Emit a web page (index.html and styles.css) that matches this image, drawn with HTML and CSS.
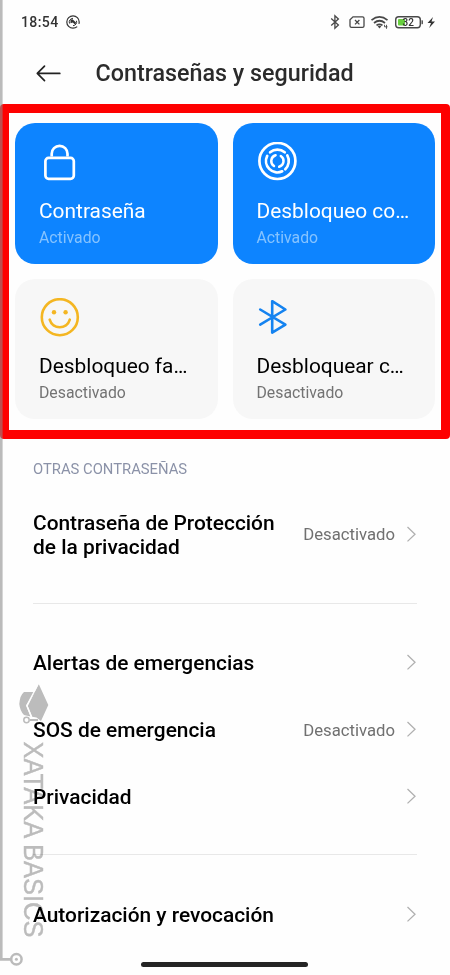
FILE: index.html
```html
<!DOCTYPE html>
<html lang="es">
<head>
<meta charset="utf-8">
<title>Contraseñas y seguridad</title>
<link rel="stylesheet" href="styles.css">
</head>
<body>
<div class="screen">
  <div class="status">
    <span class="clock">18:54</span>
    <svg class="app" width="14" height="14" viewBox="0 0 14 14" fill="none" stroke="#333"><circle cx="7" cy="7" r="6.2" stroke-width="1.2" stroke-dasharray="33 3" stroke-dashoffset="-5"/><path d="M3.5 8.5A3.8 3.8 0 0 1 7 3.3M10.5 5.8A3.8 3.8 0 0 1 7 10.7" stroke-width="1"/><path d="M4.5 4.5L6.5 4.2 10 7.5 9.2 9.8 6.8 7.6 4.5 8.2Z" fill="#333" stroke="none"/></svg>
    <svg class="tray" width="110" height="18" viewBox="0 0 110 18" fill="none" stroke="#484848">
      <path d="M1.2 5.5L8.4 12 4.9 15.2V2.8L8.4 6 1.2 12.5" stroke-width="1.3"/>
      <path d="M23 3.8H32.5Q34 3.8 34 5.3V13Q34 14.4 32.5 14.4H21.5Q20 14.4 20 13V6.8Z" stroke-width="1.3"/><path d="M25 7l4.4 4.4M29.4 7L25 11.4" stroke-width="1.3"/>
      <path d="M41.5 7.2Q49.5 .7 57.5 7.2M44 10Q49.5 5.5 55 10M46.5 12.4Q49.5 10.2 52.5 12.4" stroke-width="1.7"/><path d="M47.6 13.3Q49.5 12.2 51.4 13.3L49.5 15.5Z" fill="#484848" stroke="none"/><path d="M54.5 11.8v2h3M56.5 11.8v4" stroke-width=".9"/>
      <rect x="65.7" y="3.7" width="24.6" height="11" rx="3" stroke-width="1.4"/><rect x="68" y="6" width="7" height="6.5" rx="1" fill="#68cf3e" stroke="none"/><path d="M91.5 7.2h.8q.6 0 .6 .6v2.8q0 .6-.6 .6h-.8z" fill="#484848" stroke="none"/>
      <text x="78.2" y="12.7" text-anchor="middle" class="level">32</text>
      <path d="M103 4L97.5 10H101L99.2 15 105 8.5H101.5Z" fill="#333" stroke="none"/>
    </svg>
  </div>
  <header class="header">
    <svg width="26" height="18" viewBox="0 0 26 18" fill="none" stroke="#222" stroke-width="1.7" stroke-linecap="round" stroke-linejoin="round"><path d="M23.8 9.4H1.5M8.5 2.1L1.3 9.4l7.2 7.3"/></svg>
    <h1>Contraseñas y seguridad</h1>
  </header>
  <section class="cards">
    <div class="card on">
      <svg width="42" height="42" viewBox="0 0 42 42" fill="none" stroke="#fff" stroke-width="2.7"><rect x="6.4" y="15.9" width="28.4" height="20.9" rx="3.2"/><path d="M12.9 15.5V12.7a7.9 7.9 0 0 1 15.8 0V15.5" transform="translate(-.2 -1)"/></svg>
      <h2>Contraseña</h2><p>Activado</p>
    </div>
    <div class="card on">
      <svg width="42" height="42" viewBox="0 0 42 42" fill="none" stroke="#fff" stroke-width="2.7"><circle cx="20.4" cy="19" r="18"/><g stroke-linecap="round"><path d="M13.1 10.3A11.4 11.4 0 0 1 27.7 10.3M30.3 13.4A11.4 11.4 0 0 1 28.3 27.2M25.2 29.3A11.4 11.4 0 0 1 10.2 13.9"/><path d="M18.6 13.2A6 6 0 0 0 17 24M22.2 24.8A6 6 0 0 0 23.8 14" stroke-width="2.5"/></g></svg>
      <h2>Desbloqueo co…</h2><p>Activado</p>
    </div>
    <div class="card">
      <svg width="42" height="42" viewBox="0 0 42 42"><g fill="none" stroke="#f4b622" stroke-width="2.6"><circle cx="20.8" cy="19.2" r="18"/><path d="M10.7 21.7C13.5 31.7 28 31.7 30.8 21.7" stroke-linecap="round"/></g><circle cx="15" cy="14.2" r="2.2" fill="#f4b622"/><circle cx="26.6" cy="14.2" r="2.2" fill="#f4b622"/></svg>
      <h2>Desbloqueo fa…</h2><p>Desactivado</p>
    </div>
    <div class="card">
      <svg width="42" height="42" viewBox="0 0 42 42" fill="none" stroke="#1583f0" stroke-width="2.6" stroke-linecap="round" stroke-linejoin="round"><path d="M3.2 11.5L28.4 26.6 15.2 34.6V3.2L28.4 11.5 3.2 26.6"/></svg>
      <h2>Desbloquear c…</h2><p>Desactivado</p>
    </div>
  </section>
  <main class="list">
    <h3>OTRAS CONTRASEÑAS</h3>
    <div class="row tall"><b>Contraseña de Protección<br>de la privacidad</b><span>Desactivado</span><svg class="chev" width="11" height="18" viewBox="0 0 11 18"><path d="M1.5 1L9 8.2 1.5 15.4"/></svg></div>
    <hr class="first">
    <div class="row"><b>Alertas de emergencias</b><svg class="chev" width="11" height="18" viewBox="0 0 11 18"><path d="M1.5 1L9 8.2 1.5 15.4"/></svg></div>
    <div class="row"><b>SOS de emergencia</b><span>Desactivado</span><svg class="chev" width="11" height="18" viewBox="0 0 11 18"><path d="M1.5 1L9 8.2 1.5 15.4"/></svg></div>
    <div class="row"><b>Privacidad</b><svg class="chev" width="11" height="18" viewBox="0 0 11 18"><path d="M1.5 1L9 8.2 1.5 15.4"/></svg></div>
    <hr class="second">
    <div class="row"><b>Autorización y revocación</b><svg class="chev" width="11" height="18" viewBox="0 0 11 18"><path d="M1.5 1L9 8.2 1.5 15.4"/></svg></div>
  </main>
  <div class="homebar"></div>
  <svg class="line" width="30" height="975" viewBox="0 0 30 975">
    <g fill="none" stroke="#8b8b8b"><path d="M1.2 0V959.3H11" stroke-width="2.8"/><circle cx="16.4" cy="959.3" r="5.2" stroke-width="2.5"/></g><circle cx="16.4" cy="959.3" r="1.5" fill="#8b8b8b"/>
  </svg>
  <svg class="mark" width="60" height="975" viewBox="0 0 60 975">
    <g fill="#bdbdbd"><path d="M38.7 684L48.3 705 41 721 36.5 717.5 32.3 716.8 27.8 706Z"/><path d="M24 692H35L26 705.5 30.5 716.5 24 715Q20 711 19.3 704 20 695 24 692Z"/></g>
    <path d="M38.2 684L26.8 705.5 31.5 717" fill="none" stroke="#fff" stroke-width="1.3"/>
    <path d="M30 720H38" stroke="#bdbdbd" stroke-width="2"/><circle cx="26.5" cy="720" r="2.7" fill="#fff" stroke="#bdbdbd" stroke-width="1.5"/>
    <text transform="translate(24 741.5) rotate(90)" textLength="196" lengthAdjust="spacingAndGlyphs">XATAKA BASICS</text>
  </svg>
</div>
</body>
</html>
```
FILE: styles.css
```css
* { box-sizing: border-box; margin: 0; padding: 0; }
body { background: #fff; font-family: Roboto, "Liberation Sans", sans-serif; color: #000; }
svg { display: block; flex: none; }
.screen { position: relative; width: 450px; height: 975px; overflow: hidden; background: #fefefe; display: flex; flex-direction: column; }
.status { height: 43px; flex: none; display: flex; align-items: center; padding: 0 10px 0 21px; }
.clock { font-size: 14.1px; font-weight: 500; letter-spacing: .35px; color: #333; }
.app { margin-left: 7px; }
.tray { margin-left: auto; }
.level { font: 500 10px Roboto, sans-serif; fill: #333; stroke: none; }
.header { height: 61px; flex: none; display: flex; align-items: center; padding: 0 0 1px 36px; gap: 33.5px; }
.header h1 { font-size: 23.3px; font-weight: 500; line-height: 30px; color: #2b2b2b; white-space: nowrap; }
.cards { height: 335px; flex: none; border: 9px solid #fe0000; border-radius: 4px; padding: 10.4px 6px; display: grid; grid-template-columns: 1fr 1fr; grid-auto-rows: 140.3px; gap: 15px; }
.card { border-radius: 20px; background: #f7f7f7; padding: 19px 0 0 24px; min-width: 0; }
.card.on { background: #0d84ff; color: #fff; }
.card h2 { font-size: 20.9px; font-weight: 400; line-height: 24px; margin-top: 14.2px; white-space: nowrap; }
.card p { font-size: 15.8px; line-height: 18px; margin-top: 6px; color: #737373; }
.card.on p { color: #85c3ff; }
.list { padding: 0 33px; }
.list h3 { font-size: 14.8px; font-weight: 400; line-height: 18px; margin-top: 21px; color: #8b92a8; }
.row { height: 67px; display: flex; align-items: center; }
.row.tall { height: 114px; padding-bottom: 1px; }
.row b { flex: 1; font-size: 20.9px; font-weight: 500; line-height: 24px; white-space: nowrap; }
.row span { font-size: 16.7px; color: #707070; margin-right: 11px; }
.chev path { fill: none; stroke: #b0b0b0; stroke-width: 1.3; }
hr { border: 0; height: 1px; background: #e8e8e8; }
.first { margin: 11px 0 25.5px; }
.second { margin: 23.5px 0 26px; }
.homebar { position: absolute; left: 141px; top: 962px; width: 167px; height: 5px; border-radius: 3px; background: #242424; }
.line { position: absolute; left: 0; top: 0; opacity: .58; }
.mark { position: absolute; left: 0; top: 0; mix-blend-mode: multiply; }
.mark text { font: 28px "Liberation Sans", sans-serif; fill: #bdbdbd; stroke: #bdbdbd; stroke-width: .4; }
```
